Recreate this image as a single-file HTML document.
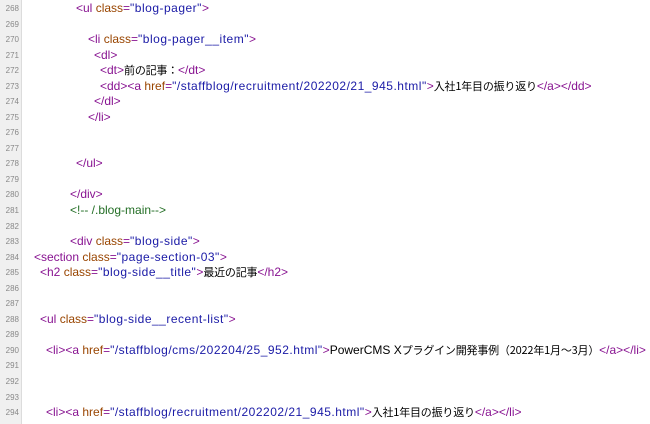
<!DOCTYPE html><html><head><meta charset="utf-8"><style>
body{margin:0;width:650px;height:424px;overflow:hidden;background:#fff;font-family:"Liberation Sans","Noto Sans CJK JP",sans-serif;}
.g{position:absolute;left:0;top:0;width:21px;height:424px;background:#f0f0f0;border-right:1px solid #dcdcdc;}
.l{position:absolute;left:0;height:15.54px;line-height:15.54px;white-space:pre;font-size:12px;color:#000;letter-spacing:0;}
.n{position:absolute;left:0;width:19px;text-align:right;font-size:8px;color:#888;letter-spacing:0;}
.j{font-family:"Noto Sans CJK JP",sans-serif;font-size:11px;letter-spacing:-0.2px;}
.t{color:#881391}.a{color:#994500}.v{color:#1a1aa6;letter-spacing:0.5px}.c{color:#236e25}
</style></head><body><div class="g"></div>
<div id="c"></div>
<script>
var L=[
[268,76,'<span class="t">&lt;ul </span><span class="a">class</span><span class="t">=</span><span class="v">"blog-pager"</span><span class="t">&gt;</span>'],
[269,0,''],
[270,88,'<span class="t">&lt;li </span><span class="a">class</span><span class="t">=</span><span class="v">"blog-pager__item"</span><span class="t">&gt;</span>'],
[271,94,'<span class="t">&lt;dl&gt;</span>'],
[272,100,'<span class="t">&lt;dt&gt;</span><span class="j">前の記事：</span><span class="t">&lt;/dt&gt;</span>'],
[273,100,'<span class="t">&lt;dd&gt;&lt;a </span><span class="a">href</span><span class="t">=</span><span class="v">"/staffblog/recruitment/202202/21_945.html"</span><span class="t">&gt;</span><span class="j">入社1年目の振り返り</span><span class="t">&lt;/a&gt;&lt;/dd&gt;</span>'],
[274,94,'<span class="t">&lt;/dl&gt;</span>'],
[275,88,'<span class="t">&lt;/li&gt;</span>'],
[276,0,''],[277,0,''],
[278,76,'<span class="t">&lt;/ul&gt;</span>'],
[279,0,''],
[280,70,'<span class="t">&lt;/div&gt;</span>'],
[281,70,'<span class="c">&lt;!-- /.blog-main--&gt;</span>'],
[282,0,''],
[283,70,'<span class="t">&lt;div </span><span class="a">class</span><span class="t">=</span><span class="v">"blog-side"</span><span class="t">&gt;</span>'],
[284,34,'<span class="t">&lt;section </span><span class="a">class</span><span class="t">=</span><span class="v">"page-section-03"</span><span class="t">&gt;</span>'],
[285,40,'<span class="t">&lt;h2 </span><span class="a">class</span><span class="t">=</span><span class="v">"blog-side__title"</span><span class="t">&gt;</span><span class="j">最近の記事</span><span class="t">&lt;/h2&gt;</span>'],
[286,0,''],[287,0,''],
[288,40,'<span class="t">&lt;ul </span><span class="a">class</span><span class="t">=</span><span class="v">"blog-side__recent-list"</span><span class="t">&gt;</span>'],
[289,0,''],
[290,46,'<span class="t">&lt;li&gt;&lt;a </span><span class="a">href</span><span class="t">=</span><span class="v">"/staffblog/cms/202204/25_952.html"</span><span class="t">&gt;</span>PowerCMS X<span class="j">プラグイン開発事例（2022年1月〜3月）</span><span class="t">&lt;/a&gt;&lt;/li&gt;</span>'],
[291,0,''],[292,0,''],[293,0,''],
[294,46,'<span class="t">&lt;li&gt;&lt;a </span><span class="a">href</span><span class="t">=</span><span class="v">"/staffblog/recruitment/202202/21_945.html"</span><span class="t">&gt;</span><span class="j">入社1年目の振り返り</span><span class="t">&lt;/a&gt;&lt;/li&gt;</span>']];
var h='';L.forEach(function(r,i){var y=(1+i*15.54).toFixed(2);h+='<div class="l" style="top:'+y+'px;width:650px"><span class="n">'+r[0]+'</span><span style="position:absolute;left:'+r[1]+'px">'+r[2]+'</span></div>';});
document.getElementById('c').innerHTML=h;
</script></body></html>
